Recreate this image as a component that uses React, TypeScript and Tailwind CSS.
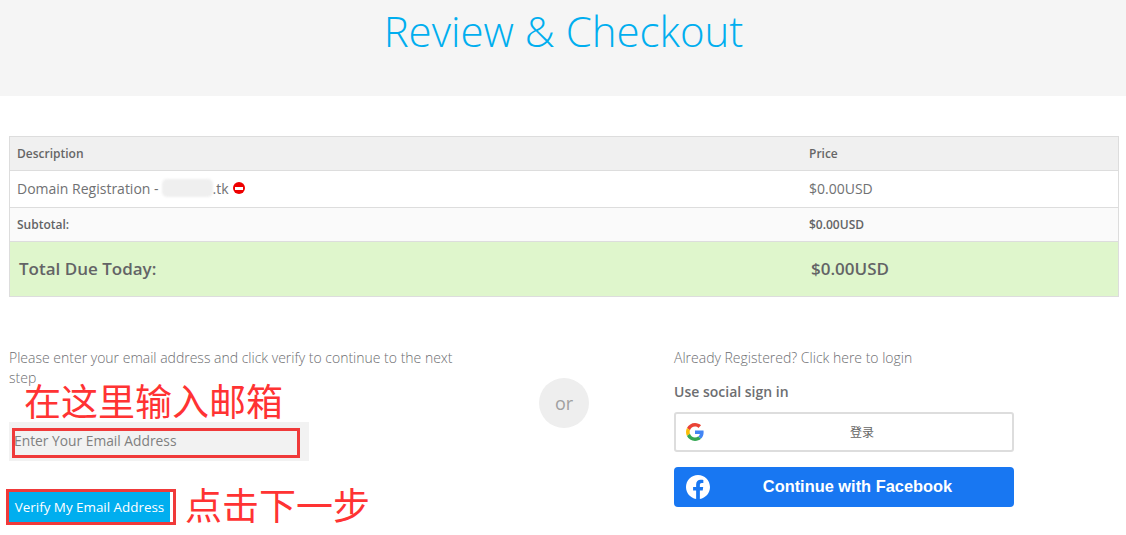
import React from "react";

function GoogleG() {
  return (
    <svg width="18" height="18" viewBox="0 0 48 48">
      <path fill="#EA4335" d="M24 9.5c3.54 0 6.71 1.22 9.21 3.6l6.85-6.85C35.9 2.38 30.47 0 24 0 14.62 0 6.51 5.38 2.56 13.22l7.98 6.19C12.43 13.72 17.74 9.5 24 9.5z" />
      <path fill="#4285F4" d="M46.98 24.55c0-1.57-.15-3.09-.38-4.55H24v9.02h12.94c-.58 2.96-2.26 5.48-4.78 7.18l7.73 6c4.51-4.18 7.09-10.36 7.09-17.65z" />
      <path fill="#FBBC05" d="M10.53 28.59c-.48-1.45-.76-2.99-.76-4.59s.27-3.14.76-4.59l-7.98-6.19C.92 16.46 0 20.12 0 24c0 3.88.92 7.54 2.56 10.78l7.97-6.19z" />
      <path fill="#34A853" d="M24 48c6.48 0 11.93-2.13 15.89-5.81l-7.73-6c-2.15 1.45-4.92 2.3-8.16 2.3-6.26 0-11.57-4.22-13.47-9.91l-7.98 6.19C6.51 42.62 14.62 48 24 48z" />
    </svg>
  );
}

function FacebookIcon() {
  return (
    <svg width="24" height="24" viewBox="0 0 24 24">
      <path fill="#fff" d="M24 12.07C24 5.4 18.63 0 12 0S0 5.4 0 12.07c0 6.03 4.39 11.02 10.13 11.93v-8.44H7.08v-3.49h3.05V9.41c0-3.02 1.79-4.69 4.53-4.69 1.31 0 2.68.24 2.68.24v2.97h-1.51c-1.49 0-1.96.93-1.96 1.89v2.25h3.33l-.53 3.49h-2.8V24C19.61 23.09 24 18.1 24 12.07z" />
    </svg>
  );
}

export default function App() {
  return (
    <div className="w-[1126px] h-[535px] overflow-hidden bg-white font-['Open_Sans',sans-serif] text-[#58595b]">
      <header className="h-[96px] bg-[#f5f5f5] flex justify-center">
        <h1 className="text-[42px] leading-[62px] font-light text-[#00aeef] ml-[1px]">Review &amp; Checkout</h1>
      </header>

      <div className="ml-[9px] w-[1110px] mt-[40px] border border-[#dddddd]">
        <div className="flex h-[34px] items-center bg-[#f0f0f0] border-b border-[#dddddd] text-[12px] font-semibold text-[#666666]">
          <div className="w-[799px] pl-[7px]">Description</div>
          <div>Price</div>
        </div>
        <div className="flex h-[37px] items-center pb-[2px] bg-white border-b border-[#dddddd] text-[14px] text-[#707173]">
          <div className="w-[799px] pl-[7px] flex items-center">
            <span>Domain Registration -</span>
            <span className="ml-[3px] w-[51px] h-[18px] bg-[#efefef] rounded-[5px] blur-[1px]" />
            <span>.tk</span>
            <span className="ml-[4px] w-[12px] h-[12px] rounded-full bg-[#ee0000] flex items-center justify-center">
              <span className="w-[8px] h-[3px] bg-white" />
            </span>
          </div>
          <div>$0.00USD</div>
        </div>
        <div className="flex h-[34px] items-center bg-[#fafafa] border-b border-[#dddddd] text-[12px] font-semibold text-[#636466]">
          <div className="w-[799px] pl-[7px]">Subtotal:</div>
          <div>$0.00USD</div>
        </div>
        <div className="flex h-[54px] items-center bg-[#dff6cc] text-[17px] font-semibold text-[#636466]">
          <div className="w-[801px] pl-[9px]">Total Due Today:</div>
          <div>$0.00USD</div>
        </div>
      </div>

      <div className="relative flex mx-[9px] mt-[51px]">
        <div className="w-[450px]">
          <p className="text-[14px] leading-[20px] font-light text-[#6d6e71]">
            Please enter your email address and click verify to continue to the next step
          </p>
          <div className="mt-[34px] w-[300px] h-[39px] bg-[#f2f2f2] flex items-center pl-[5px] text-[13.8px] text-[#808080]">
            Enter Your Email Address
          </div>
          <button className="block mt-[31px] h-[30px] w-[161px] bg-[#00aeef] text-white text-[13.4px] text-center">
            Verify My Email Address
          </button>
        </div>

        <div className="w-[80px] ml-[65px] flex justify-center pt-[30px]">
          <div className="w-[50px] h-[50px] rounded-full bg-[#eeeeee] flex items-center justify-center text-[18px] text-[#a0a0a0]">
            or
          </div>
        </div>

        <div className="w-[340px] ml-[70px]">
          <p className="text-[14px] leading-[20px] font-light text-[#6d6e71]">Already Registered? Click here to login</p>
          <p className="mt-[14px] text-[14px] leading-[20px] font-semibold text-[#6d6e71]">Use social sign in</p>
          <div className="relative mt-[10px] h-[40px] rounded-[3px] border-2 border-[#dddddd] flex items-center justify-center">
            <span className="absolute left-[10px] top-[9px] flex"><GoogleG /></span>
            <span className="ml-[36px] text-[12px] text-[#666666] font-['Noto_Sans_CJK_SC',sans-serif]">登录</span>
          </div>
          <div className="relative mt-[15px] h-[40px] pb-[2px] rounded-[4px] bg-[#1877f2] flex items-center justify-center">
            <span className="absolute left-[12px] top-[8px] flex"><FacebookIcon /></span>
            <span className="ml-[27px] text-[16.4px] font-bold text-white font-['Liberation_Sans',sans-serif]">Continue with Facebook</span>
          </div>
        </div>

        <div className="absolute left-[15px] top-[27px] text-[37px] leading-[50px] text-[#ff3333] font-['Noto_Sans_CJK_SC',sans-serif]">在这里输入邮箱</div>
        <div className="absolute left-[3px] top-[80px] w-[288px] h-[30px] border-[3px] border-[#f03a3a]" />
        <div className="absolute left-[-3px] top-[141px] w-[170px] h-[36px] border-[3px] border-[#f03a3a]" />
        <div className="absolute left-[176px] top-[131px] text-[37px] leading-[50px] text-[#ff3333] font-['Noto_Sans_CJK_SC',sans-serif]">点击下一步</div>
      </div>
    </div>
  );
}
